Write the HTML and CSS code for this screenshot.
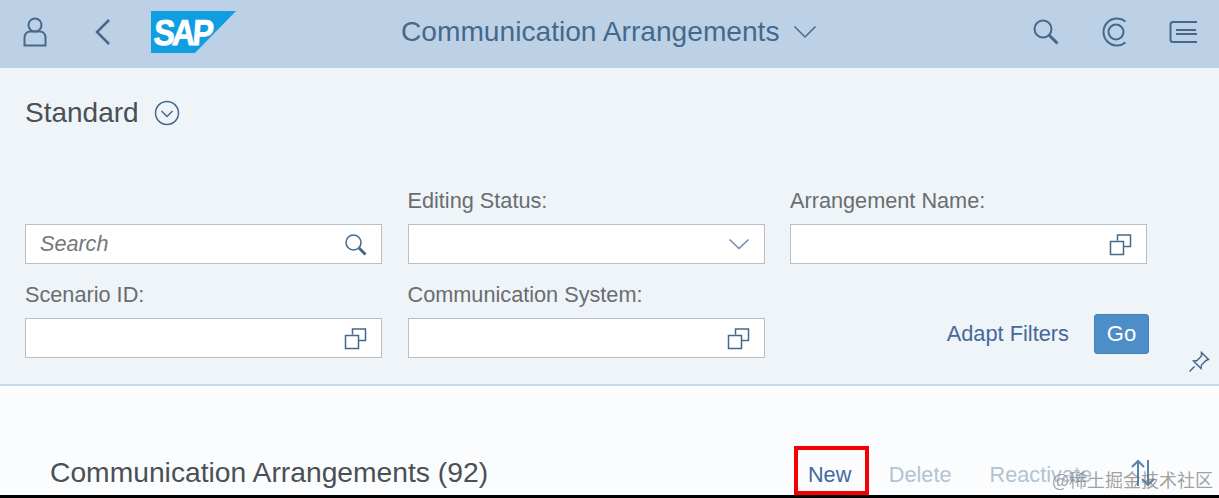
FILE: index.html
```html
<!DOCTYPE html>
<html>
  <head>
    <meta charset="utf-8" />
    <title>Communication Arrangements</title>
    <link rel="stylesheet" href="styles.css">
  </head>
  <body>
    <header class="shell">
      <div class="shell-left">
        <svg class="icon user" width="24" height="30" viewBox="0 0 24 30"><circle cx="12" cy="8" r="6.500"/><path d="M1.500 28.500v-8c0-3.500 2.500-6 5.500-6h10c3 0 5.500 2.500 5.500 6v8z"/></svg>
        <svg class="icon back" width="18" height="28" viewBox="0 0 18 28"><path d="M15 2 3 14l12 12"/></svg>
        <svg class="logo" width="85" height="42" viewBox="0 0 85 42">
          <polygon points="0,0 85,0 44,42 0,42" fill="#0f9fe0"/>
          <text class="logo-text" transform="translate(2 34) scale(.88 1) skewX(-5)">SAP</text>
        </svg>
      </div>
      <div class="shell-title">
        <span>Communication Arrangements</span>
        <svg class="icon thin" width="24" height="14" viewBox="0 0 24 14"><path d="M1.500 1.500 12 12 22.500 1.500"/></svg>
      </div>
      <div class="shell-right">
        <svg class="icon" width="26" height="26" viewBox="0 0 26 26"><circle cx="10" cy="10" r="8.500"/><path d="m16 16 8.500 8.500" class="thick"/></svg>
        <svg class="icon" width="26" height="30" viewBox="0 0 26 30"><path d="M24.500 4.500A13.500 13.500 0 1 0 24.500 25.500"/><circle cx="15" cy="15" r="7.500"/></svg>
        <svg class="icon" width="30" height="24" viewBox="0 0 30 24"><path d="M28 2H4C2.500 2 1.500 3 1.500 4.500v15C1.500 21 2.500 22 4 22h24M7 10h20M7 14h21"/></svg>
      </div>
    </header>

    <section class="filters">
      <div class="variant">
        <span>Standard</span>
        <svg class="icon thin" width="26" height="26" viewBox="0 0 26 26"><circle cx="13" cy="13" r="11.500"/><path d="m7.500 11 5.500 5.500 5.500-5.500"/></svg>
      </div>
      <div class="filter-grid">
        <div class="field">
          <div class="box">
            <span class="placeholder">Search</span>
            <svg class="icon thin" width="23" height="23" viewBox="0 0 23 23"><circle cx="9.500" cy="9.500" r="7.500"/><path d="m15 15 6.500 6.500" class="thick"/></svg>
          </div>
        </div>
        <div class="field">
          <label>Editing Status:</label>
          <div class="box">
            <svg class="icon thin pale" width="22" height="12" viewBox="0 0 22 12"><path d="M1.500 1.500 11 10.500l9.500-9"/></svg>
          </div>
        </div>
        <div class="field">
          <label>Arrangement Name:</label>
          <div class="box">
            <svg class="icon thin" width="23" height="23" viewBox="0 0 23 23"><path d="M8.500 7.500V2h13v11.500h-6.500M1.500 8.500h13v13h-13z"/></svg>
          </div>
        </div>
        <div class="field">
          <label>Scenario ID:</label>
          <div class="box">
            <svg class="icon thin" width="23" height="23" viewBox="0 0 23 23"><path d="M8.500 7.500V2h13v11.500h-6.500M1.500 8.500h13v13h-13z"/></svg>
          </div>
        </div>
        <div class="field">
          <label>Communication System:</label>
          <div class="box">
            <svg class="icon thin" width="23" height="23" viewBox="0 0 23 23"><path d="M8.500 7.500V2h13v11.500h-6.500M1.500 8.500h13v13h-13z"/></svg>
          </div>
        </div>
        <div class="field actions">
          <a class="adapt">Adapt Filters</a>
          <button class="go">Go</button>
        </div>
      </div>
      <svg class="icon thin pin" width="22" height="22" viewBox="0 0 22 22"><path d="M13.500 1.500l7 7-2.500 1-4.500 4.500-.5 3.500-7.500-7.500 3.500-.5 4.500-4.500zM6.500 15.500l-5 5"/></svg>
    </section>

    <section class="table-head">
      <h2>Communication Arrangements (92)</h2>
      <div class="toolbar">
        <span class="tool new">New</span>
        <span class="tool off">Delete</span>
        <span class="tool off">Reactivate</span>
        <svg class="icon sort" width="26" height="28" viewBox="0 0 26 28"><path d="M8 27V2M2 8l6-6 6 6M18 1v25M12 20l6 6 6-6"/></svg>
      </div>
    </section>
    <div class="watermark">@稀土掘金技术社区</div>
  </body>
</html>
```

FILE: styles.css
```css
html, body {
  height: 100%;
  margin: 0;
}

body {
  position: relative;
  display: flex;
  flex-direction: column;
  overflow: hidden;
  background-color: #fbfcfe;
  border-bottom: 3px solid #000000;
  box-sizing: border-box;
  font-family: "Liberation Sans", Arial, sans-serif;
}

.icon {
  flex: none;
  fill: none;
  stroke: #44698c;
  stroke-width: 2;
}
.icon.thin {
  stroke-width: 1.500;
}
.icon.pale {
  stroke: #6f8ba6;
}
.icon .thick {
  stroke-width: 3;
}

.shell {
  height: 68px;
  flex: none;
  box-sizing: border-box;
  display: flex;
  align-items: center;
  padding: 0 20px 4px 23px;
  background-color: #bdd1e6;
}
.shell-left {
  width: 378px;
  display: flex;
  align-items: center;
}
.shell-left .back {
  margin-left: 47px;
  stroke-width: 2.500;
}
.shell-left .logo {
  margin-left: 39px;
}
.logo-text {
  font-size: 36px;
  font-weight: bold;
  letter-spacing: -3px;
  fill: #ffffff;
  stroke: #ffffff;
  stroke-width: 0.800;
}
.shell-title {
  display: flex;
  align-items: center;
  gap: 13px;
  font-size: 28.150px;
  color: #44698c;
}
.shell-right {
  margin-left: auto;
  display: flex;
  align-items: center;
  gap: 42px;
}

.filters {
  position: relative;
  height: 318px;
  flex: none;
  box-sizing: border-box;
  padding: 0 25px;
  background-color: #eff4f9;
  border-bottom: 2px solid #c9d9e9;
}
.variant {
  display: flex;
  align-items: center;
  gap: 15px;
  padding-top: 29px;
  font-size: 28px;
  color: #4a5055;
}
.filter-grid {
  display: grid;
  grid-template-columns: repeat(3, 357px);
  grid-auto-rows: 94px;
  column-gap: 25.500px;
  margin-top: 41px;
}
.field {
  display: flex;
  flex-direction: column;
  justify-content: flex-end;
}
.field label {
  margin-bottom: 10.500px;
  font-size: 21.700px;
  color: #6a6d70;
}
.box {
  height: 40px;
  box-sizing: border-box;
  display: flex;
  align-items: center;
  justify-content: flex-end;
  padding: 0 14px;
  background-color: #ffffff;
  border: 1px solid #b9bfc4;
}
.placeholder {
  flex: 1;
  font-size: 21.600px;
  font-style: italic;
  color: #74777a;
}
.actions {
  flex-direction: row;
  align-items: center;
  justify-content: flex-end;
  gap: 25px;
  margin-right: -2px;
  padding-top: 45px;
}
.adapt {
  font-size: 21.800px;
  color: #44699a;
}
.go {
  width: 55px;
  height: 40px;
  padding: 0;
  font-family: inherit;
  font-size: 22px;
  color: #ffffff;
  background-color: #4d8ec9;
  border: 1px solid #4383bd;
  border-radius: 3px;
}
.pin {
  position: absolute;
  right: 9px;
  bottom: 11px;
}

.table-head {
  flex: 1;
  display: flex;
  align-items: flex-end;
  justify-content: space-between;
  padding: 0 63px 0 50px;
}
.table-head h2 {
  margin: 0 0 6px;
  font-size: 28.250px;
  font-weight: normal;
  color: #4a5055;
}
.toolbar {
  display: flex;
  align-items: baseline;
  gap: 38px;
}
.tool {
  font-size: 21.700px;
}
.new {
  box-sizing: border-box;
  height: 49px;
  padding: 12px 13.500px 0 9.500px;
  margin-right: -18px;
  color: #44699a;
  border: 4.500px solid #f40000;
  border-bottom-width: 4px;
}
.off {
  color: #b3c3d3;
}
.sort {
  align-self: center;
  margin-top: 5px;
  stroke: #5a82a6;
}
.watermark {
  position: absolute;
  right: 6px;
  bottom: 3px;
  font-family: "Noto Sans CJK SC", sans-serif;
  font-size: 18px;
  color: rgba(120, 120, 120, 0.7);
}
```
